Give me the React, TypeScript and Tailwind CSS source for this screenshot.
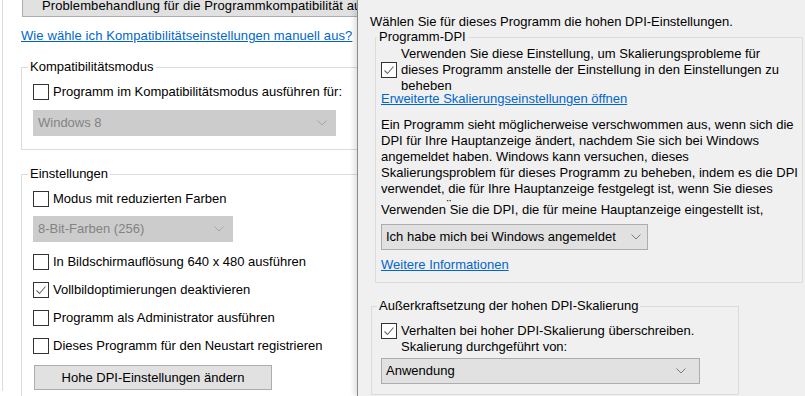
import type { ReactNode } from 'react';

function Check({ checked }: { checked?: boolean }) {
  return (
    <span className="w-[16px] h-[16px] shrink-0 border border-[#333333] bg-white flex items-center justify-center">
      {checked && (
        <svg width="14" height="14" viewBox="0 0 14 14">
          <path d="M2.5 7.5 L5.5 10.5 L11.5 3.5" fill="none" stroke="#6a6a6a" strokeWidth="1.1" />
        </svg>
      )}
    </span>
  );
}

function Chevron({ color = '#7a7a7a' }: { color?: string }) {
  return (
    <svg width="10" height="6" viewBox="0 0 10 6">
      <path d="M0.5 0.5 L5 5 L9.5 0.5" fill="none" stroke={color} strokeWidth="1" />
    </svg>
  );
}

function Row({ checked, children }: { checked?: boolean; children: ReactNode }) {
  return (
    <div className="h-[20px] flex items-center gap-[4px] whitespace-nowrap">
      <Check checked={checked} />
      <span>{children}</span>
    </div>
  );
}

function Select({ label, disabled, width, chevronPad }: { label: string; disabled?: boolean; width: string; chevronPad: string }) {
  return (
    <div
      className={`${width} h-[26px] flex items-center justify-between border pl-[4px] ${chevronPad} ${
        disabled ? 'bg-[#cccccc] border-[#cccccc] text-[#838383]' : 'bg-[#e1e1e1] border-[#adadad] text-black'
      }`}
    >
      <span className="whitespace-nowrap">{label}</span>
      <Chevron color={disabled ? '#a6a6a6' : '#7a7a7a'} />
    </div>
  );
}

export default function App() {
  return (
    <div className="w-[805px] h-[396px] overflow-hidden flex bg-white text-black text-[13px] leading-[20px] font-['Liberation_Sans',Arial,sans-serif]">
      {/* Kompatibilität-Tab im Hintergrund */}
      <div className="w-[357px] shrink-0 overflow-hidden bg-white">
        <div className="ml-[2px] w-[440px] h-full border-l border-[#dadada]">
          <button className="ml-[19px] -mt-[5px] h-[22px] pl-[19px] pr-[19px] border border-[#adadad] bg-[#e1e1e1] whitespace-nowrap text-left block tracking-[0.1px]">
            Problembehandlung für die Programmkompatibilität ausführen
          </button>
          <div className="ml-[18px] mt-[9px] text-[#0066cc] underline whitespace-nowrap tracking-[0.1px]">
            Wie wähle ich Kompatibilitätseinstellungen manuell aus?
          </div>

          <fieldset className="ml-[18px] mt-[11px] w-[410px] border border-[#dcdcdc]">
            <legend className="ml-[6px] px-[2px]">Kompatibilitätsmodus</legend>
            <div className="pl-[11px] pt-[5px] pb-[13px]">
              <Row>Programm im Kompatibilitätsmodus ausführen für:</Row>
              <div className="mt-[8px]">
                <Select label="Windows 8" disabled width="w-[303px]" chevronPad="pr-[8px]" />
              </div>
            </div>
          </fieldset>

          <fieldset className="ml-[18px] mt-[14px] w-[410px] border border-[#dcdcdc]">
            <legend className="ml-[6px] px-[2px]">Einstellungen</legend>
            <div className="pl-[11px] pt-[5px] pb-[20px]">
              <Row>Modus mit reduzierten Farben</Row>
              <div className="mt-[7px]">
                <Select label="8-Bit-Farben (256)" disabled width="w-[200px]" chevronPad="pr-[8px]" />
              </div>
              <div className="mt-[10px]">
                <Row>In Bildschirmauflösung 640 x 480 ausführen</Row>
              </div>
              <div className="mt-[8px]">
                <Row checked>Vollbildoptimierungen deaktivieren</Row>
              </div>
              <div className="mt-[8px]">
                <Row>Programm als Administrator ausführen</Row>
              </div>
              <div className="mt-[8px]">
                <Row>Dieses Programm für den Neustart registrieren</Row>
              </div>
              <button className="ml-[1px] mt-[9px] w-[238px] h-[25px] border border-[#adadad] bg-[#e1e1e1] block">
                Hohe DPI-Einstellungen ändern
              </button>
            </div>
          </fieldset>
        </div>
      </div>

      {/* Dialog: Hohe DPI-Einstellungen */}
      <div className="flex-1 bg-[#f0f0f0] border-l border-[#8a8a8a] shadow-[-3px_0_5px_rgba(0,0,0,0.12)] leading-[16px] z-10">
        <div className="ml-[12px] mt-[14px] whitespace-nowrap">
          Wählen Sie für dieses Programm die hohen DPI-Einstellungen.
        </div>

        <fieldset className="ml-[17px] -mt-[1px] w-[428px] border border-[#dcdcdc]">
          <legend className="ml-[1px] px-[2px]">Programm-DPI</legend>
          <div className="pl-[5px] pt-[1px] pb-[9px]">
            <div className="flex items-center gap-[4px] whitespace-nowrap">
              <Check checked />
              <div>
                <div>Verwenden Sie diese Einstellung, um Skalierungsprobleme für</div>
                <div>dieses Programm anstelle der Einstellung in den Einstellungen zu</div>
                <div>beheben</div>
              </div>
            </div>
            <div className="h-[10px] leading-[10px] text-[#0066cc] underline whitespace-nowrap">
              Erweiterte Skalierungseinstellungen öffnen
            </div>
            <div className="mt-[13px] h-[85px] overflow-hidden whitespace-nowrap">
              <div>Ein Programm sieht möglicherweise verschwommen aus, wenn sich die</div>
              <div>DPI für Ihre Hauptanzeige ändert, nachdem Sie sich bei Windows</div>
              <div>angemeldet haben. Windows kann versuchen, dieses</div>
              <div>Skalierungsproblem für dieses Programm zu beheben, indem es die DPI</div>
              <div>verwendet, die für Ihre Hauptanzeige festgelegt ist, wenn Sie dieses</div>
              <div>
                <span className="invisible">Programm </span>ö<span className="invisible">ffnen.</span>
              </div>
            </div>
            <div className="whitespace-nowrap">
              Verwenden Sie die DPI, die für meine Hauptanzeige eingestellt ist,
            </div>
            <div className="mt-[6px]">
              <Select label="Ich habe mich bei Windows angemeldet" width="w-[267px]" chevronPad="pr-[6px]" />
            </div>
            <div className="mt-[7px] text-[#0066cc] underline whitespace-nowrap">Weitere Informationen</div>
          </div>
        </fieldset>

        <fieldset className="ml-[13px] mt-[15px] w-[368px] border border-[#dcdcdc]">
          <legend className="ml-[5px] px-[2px]">Außerkraftsetzung der hohen DPI-Skalierung</legend>
          <div className="pl-[9px] pt-[9px] pb-[10px]">
            <div className="flex items-start gap-[4px] whitespace-nowrap">
              <Check checked />
              <div>
                <div>Verhalten bei hoher DPI-Skalierung überschreiben.</div>
                <div>Skalierung durchgeführt von:</div>
              </div>
            </div>
            <div className="mt-[3px]">
              <Select label="Anwendung" width="w-[319px]" chevronPad="pr-[13px]" />
            </div>
          </div>
        </fieldset>
      </div>
    </div>
  );
}
